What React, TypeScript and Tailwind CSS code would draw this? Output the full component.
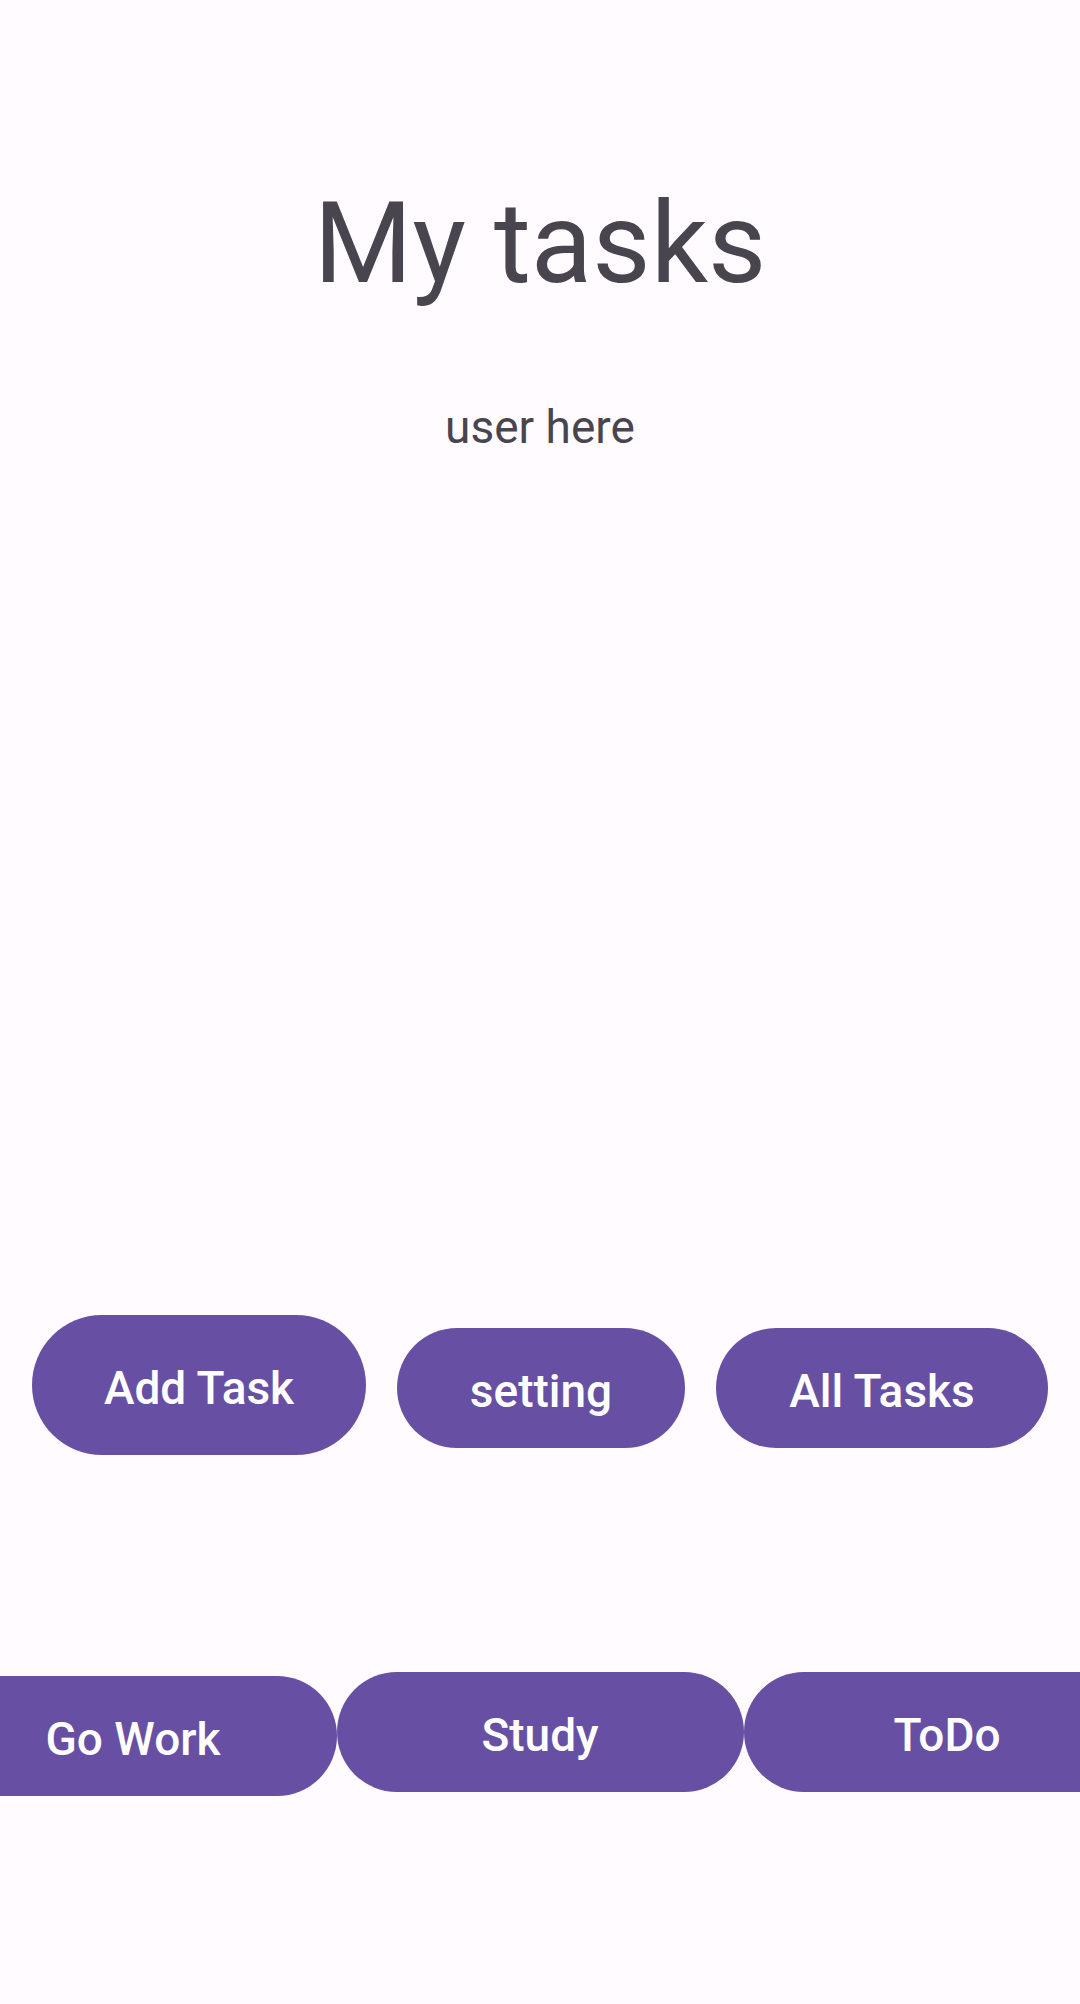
import React from "react";

const font = { fontFamily: "Roboto, 'Noto Sans', sans-serif" };

function Pill({ label, className }: { label: string; className: string }) {
  return (
    <button
      className={`shrink-0 flex items-center justify-center rounded-full bg-[#6750a4] text-white text-[46px] font-medium leading-none pt-[5px] ${className}`}
    >
      {label}
    </button>
  );
}

export default function App() {
  return (
    <div
      className="w-[1080px] min-h-[2004px] bg-[#fffbfe] overflow-hidden flex flex-col items-center pt-[187px]"
      style={font}
    >
      <h1 className="text-[113px] leading-none font-normal text-[#49454f]">My tasks</h1>
      <p className="mt-[104px] text-[46px] leading-none text-[#49454f]">user here</p>

      <div className="mt-[865px] w-full px-[32px] flex items-start justify-between">
        <Pill label="Add Task" className="w-[334px] h-[140px]" />
        <Pill label="setting" className="w-[288px] h-[120px] mt-[13px]" />
        <Pill label="All Tasks" className="w-[332px] h-[120px] mt-[13px]" />
      </div>

      <div className="mt-[217px] w-full flex items-start justify-center">
        <Pill label="Go Work" className="w-[407px] h-[120px] mt-[4px]" />
        <Pill label="Study" className="w-[407px] h-[120px]" />
        <Pill label="ToDo" className="w-[407px] h-[120px]" />
      </div>
    </div>
  );
}
